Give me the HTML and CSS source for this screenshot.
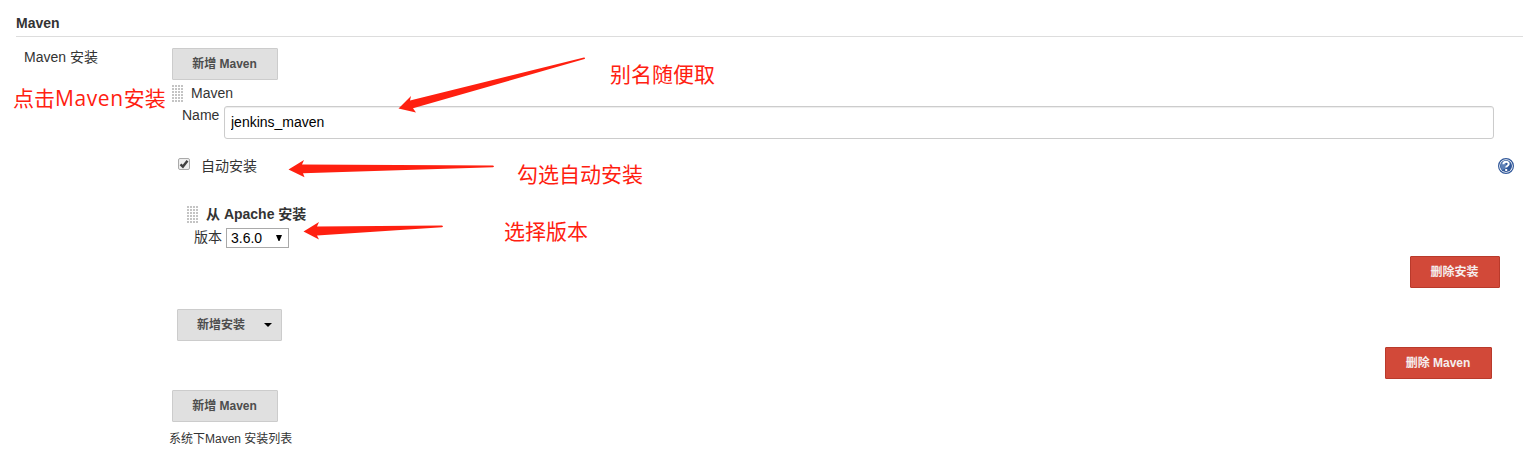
FILE: index.html
```html
<!DOCTYPE html>
<html lang="zh-CN">
<head>
<meta charset="utf-8">
<title>Maven</title>
<link rel="stylesheet" href="styles.css">
</head>
<body>
<main class="page">
  <h2 class="section-title">Maven</h2>
  <div class="setting">
    <div class="setting-label">Maven 安装</div>
    <div class="setting-body">
      <button class="btn">新增 Maven</button>
      <div class="drag-row"><i class="handle"></i><span>Maven</span></div>
      <div class="name-row"><label class="name-label" for="name">Name</label><input class="name-input" id="name" type="text" value="jenkins_maven"></div>
      <div class="auto-row">
        <svg class="checkbox" viewBox="0 0 12 12"><rect class="box" x=".5" y=".5" width="11" height="11" rx="1.5"/><path class="tick" d="M2.500 6.300 4.900 8.600 9.500 2.800"/></svg>
        <span class="auto-label">自动安装</span>
        <svg class="help" viewBox="0 0 16 16"><circle cx="8" cy="8" r="7.4" fill="#fff" stroke="#31589a" stroke-width="1.2"/><circle cx="8" cy="8" r="6" fill="#31589a"/><path d="M2.500 8a5.500 5.500 0 0 1 5.500-5.500v8L4 12z" fill="#7796c5" opacity=".65"/><path d="M5.400 6.200C5.400 2.900 10.700 2.900 10.700 5.900c0 1.800-2.500 1.800-2.500 3.700M8.200 10.900v2" fill="none" stroke="#fff" stroke-width="2"/></svg>
      </div>
      <div class="installer">
        <div class="installer-head"><i class="handle"></i><b>从 Apache 安装</b></div>
        <div class="version-row"><span>版本</span><div class="select"><span>3.6.0</span><svg class="select-arrow" viewBox="0 0 6 6"><path d="M0 0h6L3.500 6h-1z"/></svg></div></div>
      </div>
      <div class="actions actions-installer"><button class="btn danger">删除安装</button></div>
      <button class="btn menu-btn">新增安装<svg class="caret" viewBox="0 0 8 4"><path d="M0 0h8L4 4z"/></svg></button>
      <div class="actions actions-maven"><button class="btn danger danger-wide">删除 Maven</button></div>
      <button class="btn">新增 Maven</button>
      <p class="description">系统下Maven 安装列表</p>
    </div>
  </div>
</main>
<div class="note note-click">点击<span class="note-latin">Maven</span>安装</div>
<div class="note note-alias">别名随便取</div>
<div class="note note-auto">勾选自动安装</div>
<div class="note note-version">选择版本</div>
<svg class="arrows" viewBox="0 0 1531 454">
  <path d="M398.500 108.500 411 96 410 100.500 584 57.500Q586 58 584.500 59L413 108.300 416 112.500Z"/>
  <path d="M288.500 169.500 304 160 302 164.500 493 165.500Q495 166.500 493 167.200L303 173.300 304.500 177.300Z"/>
  <path d="M303.500 231.500 319 222 317 226.500 442 225.500Q444 226.300 442 227.200L317 235.500 319 239.500Z"/>
</svg>
</body>
</html>
```
FILE: styles.css
```css
* { box-sizing: border-box; }
body {
  margin: 0;
  background: #fff;
  color: #333;
  font: 14px/20px "Liberation Sans", "Noto Sans CJK SC", sans-serif;
}
.page { padding: 0 8px 0 16px; height: 454px; overflow: hidden; }
.section-title {
  margin: 0;
  height: 37px;
  padding-top: 13px;
  border-bottom: 1px solid #ddd;
  font-size: 14px;
  line-height: 20px;
}
.setting { display: grid; grid-template-columns: 156px 1fr; padding-top: 11px; }
.setting-label { padding-left: 8px; line-height: 18px; }
.setting-body { display: flex; flex-direction: column; align-items: stretch; }
.btn {
  align-self: flex-start;
  width: 106px;
  height: 32px;
  padding: 0 1px 1px 0;
  border: 1px solid #ccc;
  border-radius: 1px;
  background: #e0e0e0;
  color: #4d4d4d;
  font: bold 12px/20px "Liberation Sans", "Noto Sans CJK SC", sans-serif;
  white-space: nowrap;
}
.danger { width: 90px; border-color: #b93a2b; background: #d24939; color: #f5eeee; }
.danger-wide { width: 107px; }
.handle {
  width: 11px;
  height: 17px;
  margin: 1px 8px 0 0;
  background:
    linear-gradient(90deg, transparent 2px, #fff 2px) 0 0 / 3px 3px,
    linear-gradient(#c4c4c4 2px, #fff 2px) 0 0 / 3px 3px;
}
.drag-row { display: flex; align-items: center; height: 26px; }
.name-row { display: flex; padding: 0 29px 0 10px; }
.name-label { width: 42px; line-height: 18px; }
.name-input {
  flex: 1;
  height: 33px;
  padding: 0 6px 2px;
  border: 1px solid #ccc;
  border-radius: 3px;
  box-shadow: inset 0 1px 1px rgba(0, 0, 0, .075);
  color: #000;
  font: 14px "Liberation Sans", sans-serif;
}
.auto-row { display: flex; align-items: center; height: 54px; padding: 0 9px 0 6px; }
.checkbox { width: 12px; height: 12px; margin: -4px 11px 0 0; }
.box { fill: #eee; stroke: #aaa; }
.tick { fill: none; stroke: #404040; stroke-width: 2.4; }
.help { width: 16px; height: 16px; margin-left: auto; }
.installer { padding: 11px 0 1px 15px; }
.installer-head { display: flex; align-items: center; height: 20px; }
.version-row { display: flex; align-items: center; height: 26px; padding-left: 7px; gap: 4px; }
.select {
  display: flex;
  align-items: center;
  justify-content: space-between;
  width: 63px;
  height: 20px;
  margin-top: 2px;
  padding: 0 6px 0 4px;
  border: 1px solid #a9a9a9;
  color: #000;
}
.select-arrow { width: 6px; height: 6px; margin-top: -1px; }
.actions { display: flex; justify-content: flex-end; }
.actions-installer { padding: 5px 23px 0 0; }
.menu-btn {
  display: flex;
  align-items: center;
  justify-content: space-between;
  width: 105px;
  margin: 21px 0 0 5px;
  padding: 0 9px 1px 19px;
}
.caret { width: 8px; height: 4px; }
.actions-maven { padding: 6px 31px 11px 0; }
.description { margin: 7px 0 0 -3px; font-size: 12px; line-height: 20px; }

/* Red annotations drawn over the form */
.note {
  position: absolute;
  color: #ff2010;
  font: 400 21px/28px "Noto Sans CJK SC", sans-serif;
  white-space: nowrap;
}
.note-latin { font-family: "Open Sans", sans-serif; letter-spacing: .6px; }
.note-click { left: 13px; top: 83px; }
.note-alias { left: 610px; top: 59px; }
.note-auto { left: 517px; top: 159px; }
.note-version { left: 504px; top: 216px; }
.arrows { position: absolute; left: 0; top: 0; width: 1531px; height: 454px; fill: #ff2010; pointer-events: none; }
```
